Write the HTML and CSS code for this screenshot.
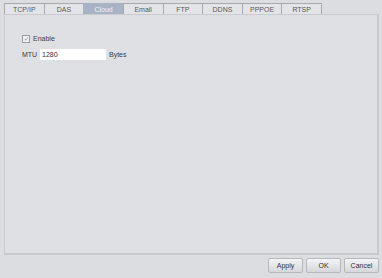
FILE: index.html
```html
<!DOCTYPE html>
<html lang="en">
<head>
    <meta charset="UTF-8">
    <title>Network - Cloud</title>
    <link rel="stylesheet" href="styles.css">
</head>
<body>
    <div class="window">
        <div class="tabs">
            <div class="tab">TCP/IP</div>
            <div class="tab">DAS</div>
            <div class="tab active">Cloud</div>
            <div class="tab">Email</div>
            <div class="tab">FTP</div>
            <div class="tab">DDNS</div>
            <div class="tab">PPPOE</div>
            <div class="tab">RTSP</div>
        </div>
        <div class="panel">
            <label class="row check-row">
                <span class="checkbox">&#10003;</span>
                <span>Enable</span>
            </label>
            <div class="row">
                <span class="label">MTU</span>
                <input class="field" type="text" value="1280">
                <span class="unit">Bytes</span>
            </div>
        </div>
        <div class="actions">
            <div class="btn">Apply</div>
            <div class="btn">OK</div>
            <div class="btn">Cancel</div>
        </div>
    </div>
</body>
</html>
```

FILE: styles.css
```css
body {
    margin: 0;
    background: #dcdde1;
    font-family: "Liberation Sans", Arial, sans-serif;
    font-size: 7px;
    color: #3c3c3c;
}
.window {
    width: 382px;
    height: 278px;
    padding: 3px 3px 0 4px;
    box-sizing: border-box;
    display: flex;
    flex-direction: column;
}
.tabs {
    display: flex;
    width: 318px;
    height: 11px;
}
.tab {
    flex: 1;
    border: 1px solid #a9aaae;
    border-right: none;
    border-bottom: none;
    background: #e3e4e7;
    color: #5a5a5a;
    display: flex;
    align-items: center;
    justify-content: center;
}
.tab:last-child {
    border-right: 1px solid #a9aaae;
}
.tab.active {
    background: #a8b4c5;
    color: #eef1f5;
    border-color: #a8b4c5;
}
.panel {
    width: 375px;
    height: 241px;
    box-sizing: border-box;
    border: 1px solid #cacbcf;
    border-right: 2px solid #c8c9cd;
    border-bottom: 2px solid #c8c9cd;
    background: #dfe0e4;
    padding: 18px 0 0 17px;
    display: flex;
    flex-direction: column;
    gap: 5px;
}
.row {
    display: flex;
    align-items: center;
    gap: 4px;
}
.check-row {
    gap: 3px;
    height: 11px;
}
.checkbox {
    width: 6px;
    height: 6px;
    border: 1px solid #9a9ca2;
    background: #eef0f4;
    color: #7d8aa0;
    font-size: 6px;
    line-height: 6px;
    text-align: center;
}
.label {
    width: 14px;
}
.field {
    width: 66px;
    height: 11px;
    box-sizing: border-box;
    border: none;
    background: #ffffff;
    font-family: inherit;
    font-size: 7px;
    color: #333;
    padding: 0 2px;
    margin: 0;
}
.unit {
    margin-left: -1px;
}
.actions {
    display: flex;
    justify-content: flex-end;
    gap: 3px;
    margin-top: 3px;
}
.btn {
    width: 35px;
    height: 15px;
    box-sizing: border-box;
    border: 1px solid #b7b8bc;
    border-radius: 2px;
    background: linear-gradient(#f3f4f6, #d6d7db);
    display: flex;
    align-items: center;
    justify-content: center;
    color: #333;
}
```
